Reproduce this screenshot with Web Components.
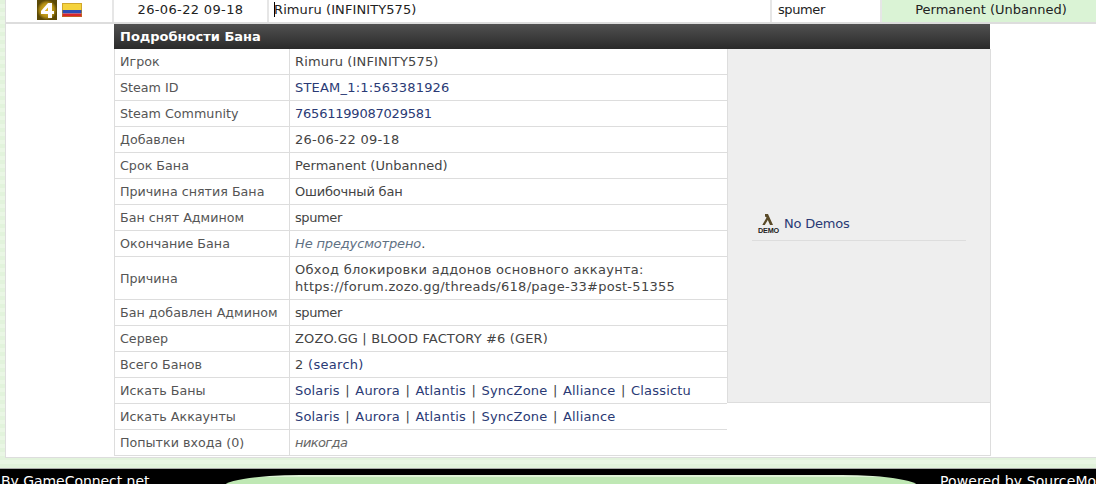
<!DOCTYPE html>
<html>
<head>
<meta charset="utf-8">
<style>
  html, body { margin: 0; height: 484px; overflow: hidden; }
  body {
    background: repeating-linear-gradient( to bottom, #e2f3dc 0, #e2f3dc 4px, #e9f6e4 4px, #e9f6e4 8px );
    color: #444;
    display: flex;
    flex-direction: column;
    font-family: 'DejaVu Sans', sans-serif;
    font-size: 13px;
    letter-spacing: .25px;
  }
  a { color: #2a3a75; }
  .sep { margin: 0 5.5px; }
</style>
</head>
<body>
<template id="ban-list-tpl">
  <style>
    :host { background: #fff; border-bottom: 1px solid #ddd; border-left: 1px solid #ddd; box-sizing: border-box; display: block; flex: none; height: 458px; margin-left: 5px; }
    .row { border-bottom: 2px solid #ddd; box-sizing: border-box; color: #222; display: grid; grid-template-columns: 108px 155px 503px 110px 1fr; height: 24px; line-height: 19px; }
    .row > div { border-right: 2px solid #e6e6e6; box-sizing: border-box; }
    .icons { align-items: flex-start; display: flex; gap: 5px; padding-left: 31px; }
    .date { letter-spacing: .35px; text-align: center; }
    .name { letter-spacing: .1px; padding-left: 5px; position: relative; }
    .caret { background: #000; height: 15px; left: 5px; position: absolute; top: 2px; width: 1px; }
    .admin { letter-spacing: -.4px; padding-left: 6px; }
    .row > .length { background: #daf3d5; border: 0; letter-spacing: 0; padding-left: 4px; text-align: center; }
    .body { margin-left: 108px; }
  </style>
  <div class="row">
    <div class="icons">
      <svg width="20" height="20" viewBox="0 0 20 20">
        <defs>
          <radialGradient id="g"><stop offset="0" stop-color="#e8bd22"/><stop offset=".7" stop-color="#b08c12"/><stop offset="1" stop-color="#5c4a06"/></radialGradient>
          <filter id="soft"><feGaussianBlur stdDeviation=".45"/></filter>
        </defs>
        <rect width="20" height="20" fill="url(#g)"/>
        <path d="M11 3h4v8h2v3h-2v4h-4v-4H4v-3zM11 7.500 7.800 11H11z" fill="#fff" filter="url(#soft)"/>
      </svg>
      <svg width="20" height="14" viewBox="0 0 20 14" style="margin-top:3px">
        <rect width="20" height="7" fill="#f5d33c"/>
        <rect y="7" width="20" height="3.500" fill="#2c4bb5"/>
        <rect y="10.500" width="20" height="3.500" fill="#d8262c"/>
        <rect x=".5" y=".5" width="19" height="13" fill="none" stroke="#b98a20" stroke-opacity=".6"/>
      </svg>
    </div>
    <div class="date">26-06-22 09-18</div>
    <div class="name"><span class="caret"></span>Rimuru (INFINITY575)</div>
    <div class="admin">spumer</div>
    <div class="length">Permanent (Unbanned)</div>
  </div>
  <div class="body"><slot></slot></div>
</template>

<template id="ban-details-tpl">
  <style>
    :host { display: block; width: 877px; }
    .head {
      background: linear-gradient( to bottom, #515151, #2a2a2a );
      color: #fff;
      font-weight: bold;
      height: 25px;
      letter-spacing: 0;
      line-height: 25px;
      padding-left: 6px;
      width: 870px;
    }
    .grid {
      border-bottom: 1px solid #ddd;
      border-left: 1px solid #ddd;
      border-right: 1px solid #ddd;
      box-sizing: border-box;
      display: grid;
      grid-template-columns: 174px 438px 263px;
      width: 877px;
    }
  </style>
  <div class="head">Подробности Бана</div>
  <div class="grid"><slot></slot></div>
</template>

<template id="detail-row-tpl">
  <style>
    :host { display: contents; }
    .cell { border-top: 1px solid #ddd; grid-column: 1; line-height: 17px; padding: 4px 5px; }
    .cell + .cell { border-left: 1px solid #ddd; grid-column: 2; }
    :host( [first] ) .cell { border-top: 0; }
    .label { align-items: center; color: #555; display: flex; font-size: 12.7px; letter-spacing: 0; }
  </style>
  <div class="cell label"></div>
  <div class="cell"><slot></slot></div>
</template>

<template id="demo-panel-tpl">
  <style>
    :host { align-items: center; background: #eee; border-bottom: 1px solid #ddd; border-left: 1px solid #ddd; display: flex; grid-column: 3; grid-row: 1 / span 13; justify-content: center; }
    .demo { align-items: center; border-bottom: 1px solid #ddd; box-sizing: border-box; color: #2a3a75; display: flex; gap: 4px; height: 31px; letter-spacing: -.2px; padding: 0 0 3px 5px; width: 214px; }
    svg { overflow: visible; }
  </style>
  <div class="demo">
    <svg width="23" height="21" viewBox="0 0 23 21">
      <path d="M8 1h3l5 11h-3l-2.200-5-3 5H5.300l4.300-7.500L8 3.500z" fill="#5a4a28"/>
      <text x="1" y="20" font-family="'Liberation Sans', sans-serif" font-size="8" font-weight="bold" fill="#222" textLength="21" lengthAdjust="spacingAndGlyphs">DEMO</text>
    </svg>
    <span>No Demos</span>
  </div>
</template>

<template id="page-footer-tpl">
  <style>
    :host { background: #000; border-top: 1px solid #aaa; box-sizing: border-box; color: #fff; display: flex; flex: none; font-size: 14px; height: 16px; letter-spacing: .1px; line-height: 18px; margin-top: 10px; overflow: hidden; }
    .mid { background: linear-gradient( to bottom, #def3d6 0, #def3d6 2px, #bfe8b4 2px ); border-radius: 80px 80px 0 0 / 14px 14px 0 0; flex: none; height: 20px; margin-top: 6px; width: 702px; }
    .side { box-sizing: border-box; flex: none; padding-top: 3px; white-space: nowrap; }
    .left { letter-spacing: -.05px; padding-left: 1px; width: 220px; }
    .right { padding-left: 18px; }
  </style>
  <div class="side left">By GameConnect.net</div>
  <div class="mid"></div>
  <div class="side right">Powered by SourceMod</div>
</template>

<ban-list>
  <ban-details>
    <demo-panel></demo-panel>
    <detail-row first label="Игрок" style="letter-spacing:.15px">Rimuru (INFINITY575)</detail-row>
    <detail-row label="Steam ID" style="letter-spacing:.2px"><a>STEAM_1:1:563381926</a></detail-row>
    <detail-row label="Steam Community" style="letter-spacing:-.22px"><a>76561199087029581</a></detail-row>
    <detail-row label="Добавлен">26-06-22 09-18</detail-row>
    <detail-row label="Срок Бана" style="letter-spacing:.05px">Permanent (Unbanned)</detail-row>
    <detail-row label="Причина снятия Бана" style="letter-spacing:-.2px">Ошибочный бан</detail-row>
    <detail-row label="Бан снят Админом" style="letter-spacing:-.4px">spumer</detail-row>
    <detail-row label="Окончание Бана" style="letter-spacing:-.15px"><i style="color:#5f7184">Не предусмотрено</i>.</detail-row>
    <detail-row label="Причина" style="letter-spacing:.28px">Обход блокировки аддонов основного аккаунта:<br>https://forum.zozo.gg/threads/618/page-33#post-51355</detail-row>
    <detail-row label="Бан добавлен Админом" style="letter-spacing:-.4px">spumer</detail-row>
    <detail-row label="Сервер" style="letter-spacing:.15px">ZOZO.GG | BLOOD FACTORY #6 (GER)</detail-row>
    <detail-row label="Всего Банов" style="letter-spacing:.3px">2 <a>(search)</a></detail-row>
    <detail-row label="Искать Баны" style="letter-spacing:.18px"><a>Solaris</a><span class="sep">|</span><a>Aurora</a><span class="sep">|</span><a>Atlantis</a><span class="sep">|</span><a>SyncZone</a><span class="sep">|</span><a>Alliance</a><span class="sep">|</span><a>Classictu</a></detail-row>
    <detail-row label="Искать Аккаунты" style="letter-spacing:.18px"><a>Solaris</a><span class="sep">|</span><a>Aurora</a><span class="sep">|</span><a>Atlantis</a><span class="sep">|</span><a>SyncZone</a><span class="sep">|</span><a>Alliance</a></detail-row>
    <detail-row label="Попытки входа (0)" style="letter-spacing:-.6px"><i style="color:#666">никогда</i></detail-row>
  </ban-details>
</ban-list>
<page-footer></page-footer>

<script>
  // Plain template stamping, nothing dynamic except the row label
  const stamp = ( name, onReady ) => {
    customElements.define( name, class extends HTMLElement {
      constructor() {
        super();
        const root = this.attachShadow( {mode: 'open'} );
        root.appendChild( document.getElementById( `${name}-tpl` ).content.cloneNode( true ) );
      }

      connectedCallback() {
        if( onReady ) onReady( this );
      }
    } );
  };

  stamp( 'ban-list' );
  stamp( 'ban-details' );
  stamp( 'demo-panel' );
  stamp( 'page-footer' );
  stamp( 'detail-row', ( el ) => {
    el.shadowRoot.querySelector( '.label' ).textContent = el.getAttribute( 'label' );
  } );
</script>
</body>
</html>
